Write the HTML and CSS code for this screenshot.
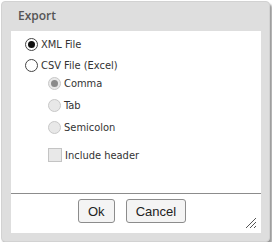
FILE: index.html
```html
<!doctype html>
<html lang="en">
<head>
    <meta charset="UTF-8">
    <title>Export</title>
    <link rel="stylesheet" href="styles.css">
</head>
<body>
<div class="dialog">
    <div class="dialog-title">Export</div>
    <div class="dialog-body">
        <div class="options">
            <label class="row"><span class="radio checked"></span>XML File</label>
            <label class="row"><span class="radio"></span>CSV File (Excel)</label>
            <div class="sub">
                <label class="row"><span class="radio disabled checked"></span>Comma</label>
                <label class="row"><span class="radio disabled"></span>Tab</label>
                <label class="row"><span class="radio disabled"></span>Semicolon</label>
                <label class="row check-row"><span class="checkbox"></span>Include header</label>
            </div>
        </div>
        <div class="buttons">
            <button class="btn">Ok</button>
            <button class="btn">Cancel</button>
        </div>
        <svg class="grip" width="12" height="12" viewBox="0 0 12 12">
            <path d="M11 1 L1 11 M11 5 L5 11 M11 9 L9 11" stroke="#555" stroke-width="1" fill="none"/>
        </svg>
    </div>
</div>
</body>
</html>
```
FILE: styles.css
```css
body {
    margin: 0;
    background: #fff;
}

.dialog {
    margin: 1px 0 0 1px;
    width: 269px;
    box-sizing: border-box;
    background: #dedede;
    border: 1px solid #d2d2d2;
    border-radius: 4px;
    padding: 0 8px 8px 9px;
    box-shadow: 2px 3px 2px rgba(0, 0, 0, 0.4);
}

.dialog-title {
    height: 29px;
    line-height: 28px;
    padding-left: 7px;
    font-family: "Open Sans", sans-serif;
    font-weight: 600;
    font-size: 12px;
    color: #555;
}

.dialog-body {
    position: relative;
    background: #fff;
    height: 202px;
}

.options {
    height: 163px;
    box-sizing: border-box;
    padding: 4px 0 0 14px;
    border-bottom: 1px solid #8c8c8c;
    font-family: "DejaVu Sans Condensed", "DejaVu Sans", sans-serif;
    font-size: 11px;
    color: #333;
}

.row {
    display: flex;
    align-items: center;
    height: 18px;
    margin-bottom: 3px;
}

.sub {
    padding-left: 23px;
    margin-top: -3px;
}

.sub .row {
    margin-bottom: 4px;
}

.sub .check-row {
    margin-top: 10px;
}

.radio {
    width: 11px;
    height: 11px;
    border: 1px solid #444;
    border-radius: 50%;
    background: #fff;
    margin-right: 3px;
    position: relative;
    flex: none;
}

.radio.checked::after {
    content: "";
    position: absolute;
    left: 2px;
    top: 2px;
    width: 7px;
    height: 7px;
    border-radius: 50%;
    background: #111;
}

.radio.disabled {
    border-color: #c8c8c8;
    background: #e8e8e8;
}

.radio.disabled.checked::after {
    background: #8a8a8a;
}

.checkbox {
    width: 12px;
    height: 12px;
    border: 1px solid #c4c4c4;
    background: #e8e8e8;
    margin-right: 3px;
    flex: none;
}

.buttons {
    display: flex;
    gap: 11px;
    padding: 5px 0 0 67px;
}

.btn {
    height: 24px;
    padding: 0 9px;
    font-family: "Liberation Sans", Arial, sans-serif;
    font-size: 13px;
    color: #222;
    background: #f4f4f4;
    border: 1px solid #8c8c8c;
    border-radius: 3px;
}

.grip {
    position: absolute;
    right: 4px;
    bottom: 4px;
}
```
